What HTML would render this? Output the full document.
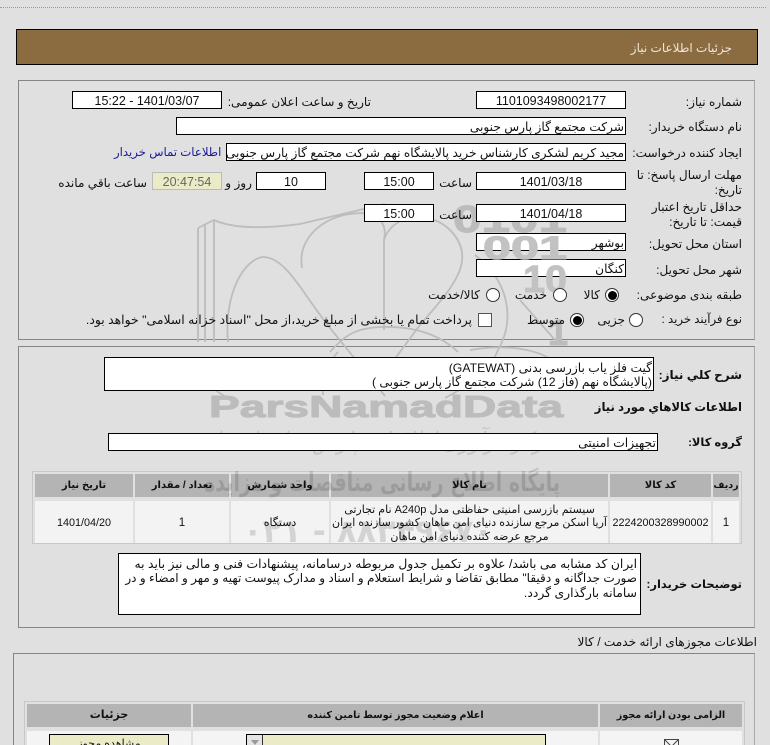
<!DOCTYPE html>
<html lang="fa" dir="rtl">
<head>
<meta charset="utf-8">
<title>جزئیات اطلاعات نیاز</title>
<style>
html,body{margin:0;padding:0;width:770px;height:745px;overflow:hidden;background:#e0e0e0}
body{position:relative;font-family:"Liberation Sans","DejaVu Sans",sans-serif;font-size:12.1px;color:#111}
div,span{position:absolute;white-space:nowrap;box-sizing:border-box}
svg{direction:ltr}
.p{border:1px solid #858585;border-right-color:#aaa}
.b{background:#fff;border:1px solid #000;height:18px;line-height:18px;text-align:center;font-size:12.5px;overflow:hidden}
.t{text-align:right;direction:rtl;font-size:12.2px;padding-right:1px;line-height:19px}
.l{right:28px;text-align:right;line-height:16px}
.r{text-align:right;line-height:16px}
.o{width:14px;height:14px;border:1px solid #333;border-radius:50%;background:#fff}
.o.on::after{content:"";position:absolute;left:1.5px;top:1.5px;width:9px;height:9px;border-radius:50%;background:#000}
.h{background:#b4b4b4;font-weight:bold;text-align:center;height:23px;line-height:23px;font-size:10px}
.c{background:#f3f3f3;text-align:center;font-size:11px}
.tl{line-height:14px;left:0;right:0;text-align:center;font-size:11px}
</style>
</head>
<body>
<div style="left:0;top:7px;width:766px;border-top:1px dotted #9a9a9a"></div>
<div style="left:16px;top:29px;width:742px;height:36px;background:#8b6c41;border:1px solid #000"></div>
<div style="right:38px;top:40px;color:#efe6d6;font-size:12px;line-height:16px">جزئیات اطلاعات نیاز</div>

<div class="p" style="left:18px;top:80px;width:737px;height:260px"></div>
<div class="p" style="left:18px;top:346px;width:737px;height:282px"></div>
<div class="p" style="left:13px;top:653px;width:742px;height:100px"></div>

<svg style="position:absolute;left:0;top:0" width="770" height="745" viewBox="0 0 770 745" fill="none">
<g stroke="#bdbdbd" stroke-width="1.8">
<path d="M198 228L214 220Q240 232 300 224L385 204"/>
<path d="M198 228V342M205 225V342M214 221V342"/>
<path d="M228 342C224 300 240 262 262 257C285 256 300 290 330 328L385 396"/>
<path d="M302 268C296 232 335 208 372 214Q388 222 384 240"/>
<path d="M384 240V330M384 240C392 214 430 208 452 232C478 262 450 290 420 325L385 372"/>
<path d="M330 352C345 335 355 328 382 327C415 326 440 335 458 352"/>
<path d="M323 395C322 375 330 360 338 352M196 358C200 378 214 392 232 400"/>
<path d="M475 255C510 282 515 320 498 350C490 370 470 385 445 398"/>
<path d="M470 350C500 345 545 345 565 372M520 300L555 340"/>
</g>
<g font-family="Liberation Sans,sans-serif" font-weight="bold" fill="#bcbcbc" stroke="#bcbcbc" stroke-width="1">
<text x="453" y="232" font-size="38" textLength="114" lengthAdjust="spacingAndGlyphs">0101</text>
<text x="548" y="345" font-size="36">1</text>
<text x="209" y="417" font-size="31" textLength="354" lengthAdjust="spacingAndGlyphs">ParsNamadData</text>
</g>
<g font-family="DejaVu Sans,sans-serif" text-anchor="middle">
<text x="385" y="449" font-size="24" font-style="italic" fill="#c6c6c6" direction="rtl" textLength="340" lengthAdjust="spacingAndGlyphs">مرکز فرآوری اطلاعات پارس نماد داده‌ها</text>
</g>
</svg>

<div class="l" style="top:94px">شماره نیاز:</div>
<div class="b" style="left:476px;top:91px;width:150px">1101093498002177</div>
<div class="r" style="right:399px;top:94px">تاریخ و ساعت اعلان عمومی:</div>
<div class="b" style="left:72px;top:91px;width:150px">1401/03/07 - 15:22</div>

<div class="l" style="top:119px">نام دستگاه خریدار:</div>
<div class="b t" style="left:176px;top:117px;width:450px">شرکت مجتمع گاز پارس جنوبی</div>

<div class="l" style="top:145px">ایجاد کننده درخواست:</div>
<div class="b t" style="left:226px;top:143px;width:400px">مجید کریم لشکری کارشناس خرید پالایشگاه نهم شرکت مجتمع گاز پارس جنوبی</div>
<div class="r" style="left:114px;top:145px;color:#1a1a99;font-size:11.7px">اطلاعات تماس خریدار</div>

<div class="l" style="top:168px;line-height:15px">مهلت ارسال پاسخ: تا<br>تاریخ:</div>
<div class="b" style="left:476px;top:172px;width:150px">1401/03/18</div>
<div class="r" style="right:298px;top:175px">ساعت</div>
<div class="b" style="left:364px;top:172px;width:70px">15:00</div>
<div class="b" style="left:256px;top:172px;width:70px">10</div>
<div class="r" style="right:518px;top:175px">روز و</div>
<div class="b" style="left:152px;top:172px;width:70px;background:#ecebc8;border-color:#bbb;color:#666">20:47:54</div>
<div class="r" style="right:623px;top:175px">ساعت باقي مانده</div>

<div class="l" style="top:200px;line-height:15px">حداقل تاریخ اعتبار<br>قیمت: تا تاریخ:</div>
<div class="b" style="left:476px;top:204px;width:150px">1401/04/18</div>
<div class="r" style="right:298px;top:207px">ساعت</div>
<div class="b" style="left:364px;top:204px;width:70px">15:00</div>

<div class="l" style="top:236px">استان محل تحویل:</div>
<div class="b t" style="left:476px;top:233px;width:150px">بوشهر</div>
<div class="l" style="top:262px">شهر محل تحویل:</div>
<div class="b t" style="left:476px;top:259px;width:150px">کنگان</div>

<svg style="position:absolute;left:0;top:0" width="770" height="300" viewBox="0 0 770 300" fill="none">
<g font-family="Liberation Sans,sans-serif" font-weight="bold" fill="#c2c2c2" stroke="#c2c2c2" stroke-width="1">
<text x="483" y="259" font-size="32" textLength="84" lengthAdjust="spacingAndGlyphs">001</text>
<text x="523" y="292" font-size="38" textLength="44" lengthAdjust="spacingAndGlyphs">10</text>
</g>
</svg>

<div class="l" style="top:287px">طبقه بندی موضوعی:</div>
<div class="o on" style="left:605px;top:288px"></div>
<div class="r" style="right:170px;top:287px">کالا</div>
<div class="o" style="left:553px;top:288px"></div>
<div class="r" style="right:223px;top:287px">خدمت</div>
<div class="o" style="left:486px;top:288px"></div>
<div class="r" style="right:290px;top:287px">کالا/خدمت</div>

<div class="l" style="top:312px;font-size:11.7px">نوع فرآیند خرید :</div>
<div class="o" style="left:629px;top:313px"></div>
<div class="r" style="right:145px;top:312px">جزیی</div>
<div class="o on" style="left:570px;top:313px"></div>
<div class="r" style="right:205px;top:312px">متوسط</div>
<div style="left:478px;top:313px;width:14px;height:14px;background:#fff;border:1px solid #555"></div>
<div class="r" style="right:298px;top:312px;font-size:12.4px">پرداخت تمام یا بخشی از مبلغ خرید،از محل "اسناد خزانه اسلامی" خواهد بود.</div>

<div class="l" style="top:367px;font-weight:bold;font-size:12px">شرح کلي نياز:</div>
<div class="b" style="left:104px;top:357px;width:550px;height:34px"></div>
<div class="r" style="right:118px;top:361px;line-height:15px;font-size:12.25px" dir="rtl">گیت فلز یاب بازرسی بدنی (GATEWAT)</div>
<div class="r" style="right:118px;top:375px;line-height:15px;font-size:12.25px" dir="rtl">(پالایشگاه نهم (فاز 12) شرکت مجتمع گاز پارس جنوبی )</div>

<div class="l" style="top:400px;font-weight:bold;font-size:11.6px">اطلاعات کالاهاي مورد نياز</div>
<div class="l" style="top:435px;font-weight:bold;font-size:11.4px">گروه کالا:</div>
<div class="b t" style="left:108px;top:433px;width:550px;font-size:12.4px">تجهیزات امنیتی</div>

<div style="left:32px;top:471px;width:710px;height:73px;border:1px solid #c8c8c8"></div>
<div class="h" style="left:713px;top:474px;width:26px;font-size:9.5px">ردیف</div>
<div class="h" style="left:610px;top:474px;width:101px">کد کالا</div>
<div class="h" style="left:331px;top:474px;width:277px">نام کالا</div>
<div class="h" style="left:231px;top:474px;width:98px">واحد شمارش</div>
<div class="h" style="left:135px;top:474px;width:94px">تعداد / مقدار</div>
<div class="h" style="left:35px;top:474px;width:98px">تاریخ نیاز</div>

<div class="c" style="left:713px;top:501px;width:26px;height:42px"></div>
<div class="c" style="left:610px;top:501px;width:101px;height:42px"></div>
<div class="c" style="left:331px;top:501px;width:277px;height:42px"></div>
<div class="c" style="left:231px;top:501px;width:98px;height:42px"></div>
<div class="c" style="left:135px;top:501px;width:94px;height:42px"></div>
<div class="c" style="left:35px;top:501px;width:98px;height:42px"></div>

<svg style="position:absolute;left:0;top:0" width="770" height="560" viewBox="0 0 770 560" fill="#000" fill-opacity=".13">
<g font-family="DejaVu Sans,sans-serif" text-anchor="middle" font-weight="bold">
<text x="382" y="491" font-size="26" direction="rtl" textLength="356" lengthAdjust="spacingAndGlyphs">پایگاه اطلاع رسانی مناقصات و مزایده</text>
<text x="368" y="542" font-size="32" direction="ltr" textLength="250" lengthAdjust="spacingAndGlyphs">۰۲۱ - ۸۸۳۴۹۶۷۰</text>
</g>
</svg>

<div style="left:713px;top:501px;width:26px;height:42px;line-height:44px;font-size:11.5px;text-align:center">1</div>
<div style="left:610px;top:501px;width:101px;height:42px;line-height:44px;font-size:10.8px;text-align:center">2224200328990002</div>
<div style="left:331px;top:501px;width:277px;height:42px">
<div class="tl" style="top:2px" dir="rtl">سیستم بازرسی امنیتی حفاظتی مدل A240p نام تجارتی</div>
<div class="tl" style="top:15px" dir="rtl">آریا اسکن مرجع سازنده دنیای امن ماهان کشور سازنده ایران</div>
<div class="tl" style="top:29px" dir="rtl">مرجع عرضه کننده دنیای امن ماهان</div>
</div>
<div style="left:231px;top:501px;width:98px;height:42px;line-height:44px;font-size:11px;text-align:center">دستگاه</div>
<div style="left:135px;top:501px;width:94px;height:42px;line-height:44px;font-size:11.5px;text-align:center">1</div>
<div style="left:35px;top:501px;width:98px;height:42px;line-height:44px;font-size:10.8px;text-align:center">1401/04/20</div>

<div class="l" style="top:577px;font-weight:bold;font-size:11.5px">توضیحات خریدار:</div>
<div class="b" style="left:118px;top:553px;width:523px;height:62px"></div>
<div class="r" style="right:133px;top:557px;line-height:14px;font-size:12.35px">ایران کد مشابه می باشد/ علاوه بر تکمیل جدول مربوطه درسامانه، پیشنهادات فنی و مالی نیز باید به</div>
<div class="r" style="right:133px;top:571px;line-height:14px;font-size:12.05px">صورت جداگانه و دقیقا" مطابق تقاضا و شرایط استعلام و اسناد و مدارک پیوست تهیه و مهر و امضاء و در</div>
<div class="r" style="right:133px;top:586px;line-height:14px;font-size:12.35px">سامانه بارگذاری گردد.</div>

<div class="r" style="right:13px;top:634px">اطلاعات مجوزهای ارائه خدمت / کالا</div>

<div style="left:24px;top:701px;width:721px;height:50px;border:1px solid #c8c8c8"></div>
<div class="h" style="left:600px;top:704px;width:142px;font-size:9.6px">الزامی بودن ارائه مجوز</div>
<div class="h" style="left:193px;top:704px;width:405px;font-size:9.6px">اعلام وضعیت مجوز توسط تامین کننده</div>
<div class="h" style="left:27px;top:704px;width:164px;font-size:11px">جزئیات</div>
<div class="c" style="left:600px;top:731px;width:142px;height:14px;background:#f4f4f4"></div>
<div class="c" style="left:193px;top:731px;width:405px;height:14px;background:#f4f4f4"></div>
<div class="c" style="left:27px;top:731px;width:164px;height:14px;background:#f4f4f4"></div>

<svg style="position:absolute;left:664px;top:739px" width="15" height="8" viewBox="0 0 15 8" fill="none" stroke="#444"><path d="M.5 8V.5H14.5V8M.5 .5L7.5 7.5L14.5 .5"/></svg>
<div style="left:246px;top:734px;width:300px;height:14px;background:#ecebc8;border:1px solid #000"></div>
<div style="left:247px;top:735px;width:16px;height:12px;background:#e4e4e4;border-right:1px solid #333"></div>
<svg style="position:absolute;left:251px;top:740px" width="8" height="5" viewBox="0 0 8 5"><path d="M0 0H8L4 5Z" fill="#999"/></svg>
<div style="left:49px;top:734px;width:120px;height:14px;background:#ecebc8;border:1px solid #000;text-align:center;line-height:18px;font-size:11px;overflow:hidden">مشاهده مجوز</div>
</body>
</html>
